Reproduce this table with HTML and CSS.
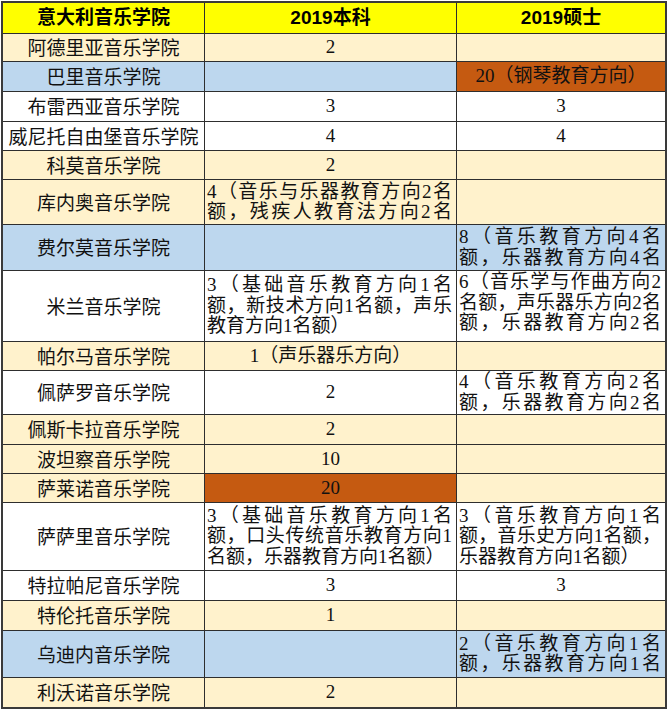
FILE: index.html
```html
<!DOCTYPE html>
<html lang="zh-CN">
<head>
<meta charset="utf-8">
<title>意大利音乐学院 2019 名额</title>
<link rel="stylesheet" href="styles.css">
</head>
<body>
<div class="sheet">
  <div class="cell yellow head">意大利音乐学院</div>
  <div class="cell yellow head">2019本科</div>
  <div class="cell yellow head">2019硕士</div>

  <div class="cell beige name">阿德里亚音乐学院</div>
  <div class="cell beige num">2</div>
  <div class="cell beige"></div>

  <div class="cell blue name">巴里音乐学院</div>
  <div class="cell blue"></div>
  <div class="cell orange num">20（钢琴教育方向）</div>

  <div class="cell white name">布雷西亚音乐学院</div>
  <div class="cell white num">3</div>
  <div class="cell white num">3</div>

  <div class="cell white name">威尼托自由堡音乐学院</div>
  <div class="cell white num">4</div>
  <div class="cell white num">4</div>

  <div class="cell beige name">科莫音乐学院</div>
  <div class="cell beige num">2</div>
  <div class="cell beige"></div>

  <div class="cell beige name">库内奥音乐学院</div>
  <div class="cell beige multi"><div class="lines"><span class="jl">4（音乐与乐器教育方向2名</span><span class="jl">额，残疾人教育法方向2名</span></div></div>
  <div class="cell beige"></div>

  <div class="cell blue name">费尔莫音乐学院</div>
  <div class="cell blue"></div>
  <div class="cell blue multi"><div class="lines"><span class="jl">8（音乐教育方向4名</span><span class="jl">额，乐器教育方向4名</span></div></div>

  <div class="cell white name">米兰音乐学院</div>
  <div class="cell white multi"><div class="lines"><span class="jl">3（基础音乐教育方向1名</span><span class="jl">额，新技术方向1名额，声乐</span><span class="ll">教育方向1名额）</span></div></div>
  <div class="cell white multi top"><div class="lines"><span class="jl">6（音乐学与作曲方向2</span><span class="jl">名额，声乐器乐方向2名</span><span class="jl">额，乐器教育方向2名</span></div></div>

  <div class="cell beige name">帕尔马音乐学院</div>
  <div class="cell beige num">1（声乐器乐方向）</div>
  <div class="cell beige"></div>

  <div class="cell white name">佩萨罗音乐学院</div>
  <div class="cell white num">2</div>
  <div class="cell white multi"><div class="lines"><span class="jl">4（音乐教育方向2名</span><span class="jl">额，乐器教育方向2名</span></div></div>

  <div class="cell beige name">佩斯卡拉音乐学院</div>
  <div class="cell beige num">2</div>
  <div class="cell beige"></div>

  <div class="cell beige name">波坦察音乐学院</div>
  <div class="cell beige num">10</div>
  <div class="cell beige"></div>

  <div class="cell beige name">萨莱诺音乐学院</div>
  <div class="cell orange num">20</div>
  <div class="cell beige"></div>

  <div class="cell white name">萨萨里音乐学院</div>
  <div class="cell white multi"><div class="lines"><span class="jl">3（基础音乐教育方向1名</span><span class="jl">额，口头传统音乐教育方向1</span><span class="ll">名额，乐器教育方向1名额）</span></div></div>
  <div class="cell white multi"><div class="lines"><span class="jl">3（音乐教育方向1名</span><span class="jl">额，音乐史方向1名额，</span><span class="ll">乐器教育方向1名额）</span></div></div>

  <div class="cell white name">特拉帕尼音乐学院</div>
  <div class="cell white num">3</div>
  <div class="cell white num">3</div>

  <div class="cell beige name">特伦托音乐学院</div>
  <div class="cell beige num">1</div>
  <div class="cell beige"></div>

  <div class="cell blue name">乌迪内音乐学院</div>
  <div class="cell blue"></div>
  <div class="cell blue multi"><div class="lines"><span class="jl">2（音乐教育方向1名</span><span class="jl">额，乐器教育方向1名</span></div></div>

  <div class="cell beige name">利沃诺音乐学院</div>
  <div class="cell beige num">2</div>
  <div class="cell beige"></div>
</div>
</body>
</html>
```

FILE: styles.css
```css
html, body {
  margin: 0;
  padding: 0;
  background: #ffffff;
}

.sheet {
  margin: 1px 0 0 1px;
  width: max-content;
  display: grid;
  grid-template-columns: 201px 251px 208px;
  grid-template-rows: 30px 27px 29px 29px 28px 28px 44px 45px 70px 28px 43px 29px 28px 28px 67px 29px 29px 46px 29px;
  gap: 1px;
  background: #2e2e2e;
  border: 2px solid #3a3a3a;
  font-family: "Liberation Serif", "Noto Sans CJK SC", sans-serif;
  font-size: 19px;
  line-height: 20.5px;
  color: #111;
}

.cell {
  display: flex;
  flex-direction: column;
  justify-content: center;
  align-items: center;
  overflow: hidden;
  white-space: nowrap;
  min-width: 0;
  min-height: 0;
}

.yellow { background: #ffff00; }
.beige  { background: #fff2cc; }
.blue   { background: #bdd7ee; }
.white  { background: #ffffff; }
.orange { background: #c55a11; }

.head {
  font-family: "Liberation Sans", "Noto Sans CJK SC", sans-serif;
  font-weight: 700;
  font-size: 19px;
  color: #000;
}

.name {
  font-family: "Noto Sans CJK SC", sans-serif;
}

.multi {
  justify-content: flex-start;
  align-items: stretch;
  white-space: normal;
  padding: 0 4px 0 2px;
}

.lines {
  margin: auto 0;
  display: flex;
  flex-direction: column;
}

.top .lines {
  margin: 1px 0 auto;
}

.jl {
  display: block;
  text-align: justify;
  text-align-last: justify;
}

.ll {
  display: block;
  text-align: left;
}
```
